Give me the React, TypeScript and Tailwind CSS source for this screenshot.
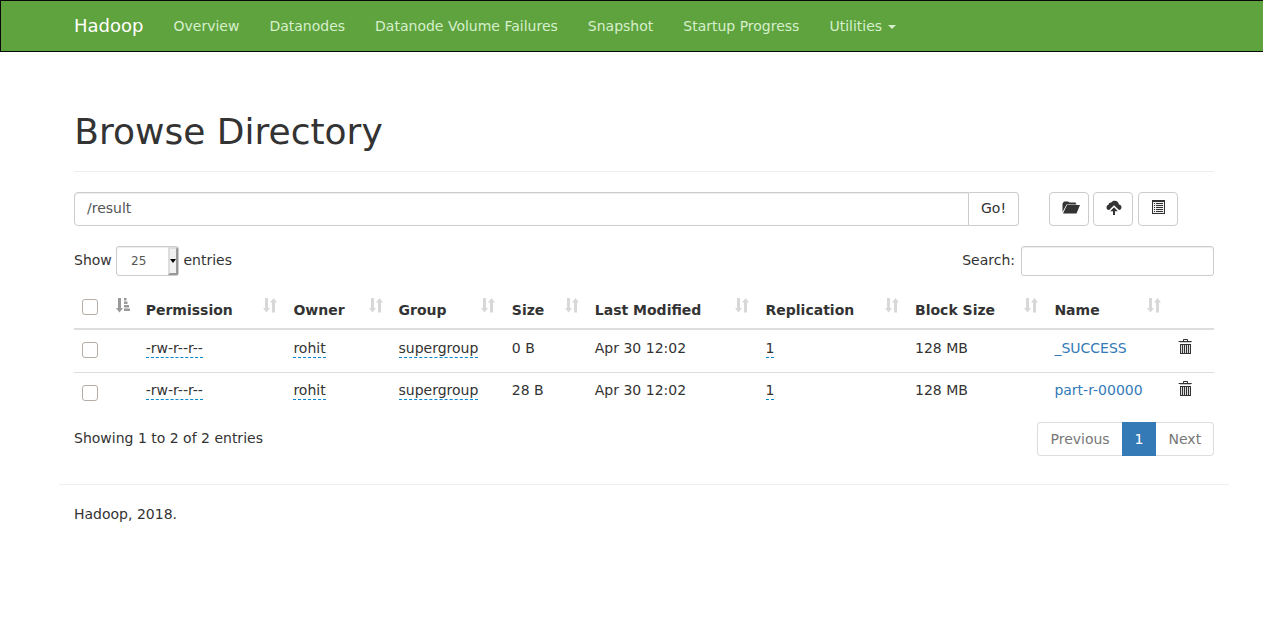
import type { ReactNode } from 'react';

const navItems = ['Overview', 'Datanodes', 'Datanode Volume Failures', 'Snapshot', 'Startup Progress'];

const columns = [
  { label: '', width: 'w-[30px]', pad: 'pl-2 pr-2' },
  { label: 'Permission', width: 'w-[147px]', pad: 'pl-[7.7px] pr-2' },
  { label: 'Owner', width: 'w-[106px]', pad: 'pl-[8.4px] pr-[8.5px]' },
  { label: 'Group', width: 'w-[113px]', pad: 'pl-[7.5px] pr-[9px]' },
  { label: 'Size', width: 'w-[83px]', pad: 'pl-[7.8px] pr-[8.5px]' },
  { label: 'Last Modified', width: 'w-[171px]', pad: 'pl-[7.8px] pr-[9px]' },
  { label: 'Replication', width: 'w-[149px]', pad: 'pl-[7.5px] pr-2' },
  { label: 'Block Size', width: 'w-[139px]', pad: 'pl-2 pr-2' },
  { label: 'Name', width: 'w-[124px]', pad: 'pl-[8.4px] pr-[9px]' },
];

const files = [
  { size: '0 B', name: '_SUCCESS' },
  { size: '28 B', name: 'part-r-00000' },
];

function SortIcon() {
  return (
    <svg width="14" height="15" viewBox="0 0 14 15" fill="#d8d8d8" className="shrink-0">
      <path d="M2 0h3v10h2L3.5 14.5 0 10h2zM9 14.5V4.500H7L10.500 0 14 4.500h-2v10z" />
    </svg>
  );
}

function SortActiveIcon() {
  return (
    <svg width="14" height="15" viewBox="0 0 14 15" fill="#999" className="shrink-0">
      <path d="M2 0h3v10h2L3.500 14.500 0 10h2zM8 0h2.500v2.500H8zM8 3.500h3.500V6H8zM8 7h5v2.500H8zM8 10.500h6V13H8z" />
    </svg>
  );
}

function FolderIcon() {
  return (
    <svg width="18" height="13" viewBox="0 0 18 13" fill="#333" className="block">
      <path d="M0.500 11V2.500L2 0.500h4l1.500 1H13.500L14.500 3.500H4.500z" />
      <path d="M5 4h13L14.500 12.500H1z" />
    </svg>
  );
}

function UploadIcon() {
  return (
    <svg width="16" height="15" viewBox="0 0 16 15" fill="#333" className="block">
      <path d="M2.800 10C1.300 10 .5 8.800.5 7.500.5 6 1.500 4.800 2.700 4.500 2.700 3.200 4 2.300 5.200 2.500 6 1.300 7.200 .7 8.700.7c2.200 0 4 1.700 4.200 3.800C14.500 4.800 15.500 5.900 15.500 7.300 15.500 8.900 14.500 10 13 10L8 5.300 3.200 10z" />
      <path d="M8 7.300l3.800 3.900H9V15H7V11.200H4.200z" />
    </svg>
  );
}

function ListIcon() {
  return (
    <svg width="13" height="14" viewBox="0 0 13 14" fill="#333" className="block">
      <path d="M0 0h13v14H0z" />
      <path d="M1 2h11v11H1z" fill="#f0f0f0" />
      <path d="M2 3h1v1H2zM4 3h7v1H4zM2 5h1v1H2zM4 5h7v1H4zM2 7h1v1H2zM4 7h7v1H4zM2 9h1v1H2zM4 9h7v1H4zM2 11h1v1H2zM4 11h7v1H4z" />
    </svg>
  );
}

function TrashIcon() {
  return (
    <svg width="14" height="15" viewBox="0 0 14 15" fill="#333" className="block">
      <path d="M5 2V.8Q5 0 5.800 0h3.400Q10 0 10 .8V2h3.700v1H.6V2zM6 1v1h3V1z" fillRule="evenodd" />
      <path d="M2 3h11v1H2z" fill="#ccc" />
      <path d="M2 5h11v10H2z" />
      <path d="M3 6h1v8H3zM5 6h1v8H5zM7 6h1v8H7zM9 6h1v8H9zM11 6h1v8h-1z" fill="#ddd" />
    </svg>
  );
}

function Checkbox() {
  return (
    <input
      type="checkbox"
      className="block size-4 appearance-none rounded-[3px] border border-[#b6aea6] bg-white"
    />
  );
}

function Editable({ children }: { children: ReactNode }) {
  return <span className="border-b border-dashed border-[#0088cc] pb-px">{children}</span>;
}

function IconButton({ label, children }: { label: string; children: ReactNode }) {
  return (
    <button
      aria-label={label}
      className="flex h-[34px] w-10 justify-center rounded border border-[#ccc] bg-white pt-[7px]"
    >
      {children}
    </button>
  );
}

export default function App() {
  return (
    <div className="min-h-[641px] bg-white font-['DejaVu_Sans',sans-serif] text-sm leading-5 text-[#333]">
      <nav className="flex h-[52px] items-center border border-r-0 border-[#080808] bg-[#5fa33e] pl-[73px] text-[#d6efcc]">
        <a className="mr-[30px] w-[69.5px] text-lg leading-5 text-white">Hadoop</a>
        <div className="flex gap-[30px]">
          {navItems.map((item) => (
            <a key={item}>{item}</a>
          ))}
          <a className="flex items-center">
            Utilities
            <span className="ml-1.5 mt-0.5 border-x-4 border-t-4 border-x-transparent border-t-[#d6efcc]" />
          </a>
        </div>
      </nav>

      <main className="ml-[74px] w-[1140px]">
        <h1 className="h-[120px] border-b border-[#eee] pt-[60px] text-[36px] leading-[40px] indent-[0.25px]">
          Browse Directory
        </h1>

        <div className="mt-5 flex">
          <input
            defaultValue="/result"
            className="h-[34px] w-[895px] rounded-l border border-[#ccc] px-3 pb-[3px] text-[#555] shadow-[inset_0_1px_1px_rgba(0,0,0,0.075)]"
          />
          <button className="h-[34px] w-[50px] rounded-r border border-l-0 border-[#ccc] pb-[3px]">Go!</button>
          <div className="ml-[30px] flex gap-1">
            <IconButton label="Create directory"><span className="ml-[3px] mt-px"><FolderIcon /></span></IconButton>
            <IconButton label="Upload files"><span className="ml-px"><UploadIcon /></span></IconButton>
            <span className="ml-px"><IconButton label="Cut and paste"><span className="ml-px"><ListIcon /></span></IconButton></span>
          </div>
        </div>

        <div className="mt-5 flex h-[30px] justify-between">
          <div className="flex">
            <span className="w-[42px] pt-1">Show</span>
            <div className="flex h-[30px] w-[63px] justify-between rounded-[3px] border border-[#ccc] text-xs leading-5 text-[#555] shadow-[inset_0_1px_1px_rgba(0,0,0,0.075)]">
              <span className="pl-3.5 pt-1">25</span>
              <span className="flex w-[10px] items-center justify-center border-2 border-y-[#ddd] border-b-[#999] border-l-[#ddd] border-r-[#999] bg-[#f0f0f0]">
                <svg width="6" height="4" viewBox="0 0 6 4" className="shrink-0"><path d="M0 0h6L3 4z" /></svg>
              </span>
            </div>
            <span className="pl-[4.5px] pt-1">entries</span>
          </div>
          <label className="flex">
            <span className="pr-1.5 pt-1">Search:</span>
            <input className="h-[30px] w-[193px] rounded-[3px] border border-[#ccc] shadow-[inset_0_1px_1px_rgba(0,0,0,0.075)]" />
          </label>
        </div>

        <table className="mt-[10px] w-[1140px] table-fixed border-collapse text-left">
          <colgroup>
            <col className="w-[34px]" />
            {columns.map((column) => (
              <col key={column.label} className={column.width} />
            ))}
            <col className="w-[44px]" />
          </colgroup>
          <thead>
            <tr className="h-[43px] border-b-2 border-[#ddd]">
              <th className="p-0 pl-2 pt-[13px] align-top"><Checkbox /></th>
              {columns.map((column, index) => (
                <th key={column.label} className={`py-0 align-top ${column.pad}`}>
                  <div className="flex justify-between whitespace-nowrap">
                    <span className="pt-[14px]">{column.label}</span>
                    <span className="pt-3">{index === 0 ? <SortActiveIcon /> : <SortIcon />}</span>
                  </div>
                </th>
              ))}
              <th />
            </tr>
          </thead>
          <tbody>
            {files.map((file, row) => {
              const values: ReactNode[] = [
                null,
                <Editable>-rw-r--r--</Editable>,
                <Editable>rohit</Editable>,
                <Editable>supergroup</Editable>,
                file.size,
                'Apr 30 12:02',
                <Editable>1</Editable>,
                '128 MB',
                <a className="text-[#337ab7]">{file.name}</a>,
              ];
              const top = row === 0 ? 'pt-2' : 'pt-[7px]';
              return (
                <tr key={file.name} className="h-[43px] border-[#ddd] not-first:h-[42px] not-first:border-t">
                  <td className="p-0 pl-2 pt-3 align-top"><Checkbox /></td>
                  {columns.map((column, index) => (
                    <td key={column.label} className={`whitespace-nowrap pb-0 align-top ${top} ${column.pad}`}>
                      {values[index]}
                    </td>
                  ))}
                  <td className={`pb-0 pl-2 align-top ${top}`}>
                    <span className="block pt-px"><TrashIcon /></span>
                  </td>
                </tr>
              );
            })}
          </tbody>
        </table>

        <div className="mt-2 flex h-[34px] justify-between">
          <span className="pt-1.5">Showing 1 to 2 of 2 entries</span>
          <div className="flex text-[#777]">
            <a className="w-[85px] rounded-l border border-r-0 border-[#ddd] pl-[12.5px] pt-1.5">Previous</a>
            <a className="w-[34px] bg-[#337ab7] pt-[7px] text-center text-white">1</a>
            <a className="w-[58px] rounded-r border border-l-0 border-[#ddd] pl-[12.5px] pt-1.5">Next</a>
          </div>
        </div>
      </main>

      <footer className="ml-[59px] mt-7 w-[1170px] border-t border-[#eee] pl-[15px] pt-[19px]">
        Hadoop, 2018.
      </footer>
    </div>
  );
}
